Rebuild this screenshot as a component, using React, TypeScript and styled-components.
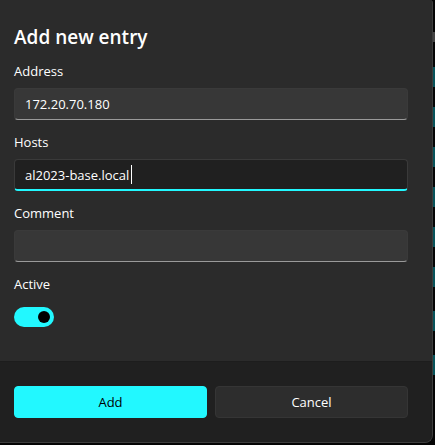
import React, { useState } from "react";
import styled, { createGlobalStyle } from "styled-components";

const accent = "#22f8ff";

const GlobalStyle = createGlobalStyle`
  *, *::before, *::after { box-sizing: border-box; }
  body {
    margin: 0;
    background: #050505;
    color: #ffffff;
    font-family: "Segoe UI", "Open Sans", "Noto Sans", sans-serif;
    font-size: 13px;
    line-height: 20px;
  }
  button, input { font: inherit; color: inherit; }
`;

const Screen = styled.main`
  display: grid;
  grid-template-columns: 1fr 2px;
  align-items: start;
  min-height: 100vh;
  overflow: hidden;
`;

const Dialog = styled.form`
  background: #2b2b2b;
  border: 1px solid #3d3d3d;
  border-top: 0;
  border-left: 0;
  border-radius: 0 3px 8px 0;
  overflow: hidden;
`;

const Body = styled.div`
  display: flex;
  flex-direction: column;
  gap: 12px;
  padding: 23px 24px 34px 14px;
`;

const Title = styled.h1`
  margin: 0 0 -2px;
  font-size: 19px;
  font-weight: 600;
  line-height: 28px;
`;

const Field = styled.div<{ $gap?: number }>`
  display: flex;
  flex-direction: column;
  align-items: stretch;
  gap: ${({ $gap = 7 }) => $gap}px;
`;

const Label = styled.label`
  align-self: flex-start;
`;

const InputShell = styled.div<{ $active?: boolean }>`
  display: flex;
  align-items: center;
  gap: 2px;
  height: 32px;
  padding: 0 10px;
  border: 1px solid #3a3a3a;
  border-bottom: ${({ $active }) => ($active ? `2px solid ${accent}` : "1px solid #9a9a9a")};
  border-radius: 4px;
  background: ${({ $active }) => ($active ? "#202020" : "#373737")};
`;

const TextInput = styled.input<{ $fit?: boolean }>`
  flex: ${({ $fit }) => ($fit ? "0 1 auto" : "1")};
  field-sizing: ${({ $fit }) => ($fit ? "content" : "fixed")};
  min-width: 0;
  padding: 0;
  border: 0;
  outline: 0;
  background: transparent;
  caret-color: ${({ $fit }) => ($fit ? "transparent" : "auto")};
`;

const Caret = styled.span`
  width: 1px;
  height: 19px;
  background: #ffffff;
`;

const Switch = styled.input`
  appearance: none;
  display: flex;
  align-items: center;
  width: 40px;
  height: 20px;
  margin: 0;
  padding: 0 4px;
  border-radius: 10px;
  background: #555555;

  &::before {
    content: "";
    width: 12px;
    height: 12px;
    border-radius: 50%;
    background: #000000;
  }
  &:checked {
    justify-content: flex-end;
    background: ${accent};
  }
`;

const Footer = styled.footer`
  display: grid;
  grid-template-columns: 1fr 1fr;
  gap: 8px;
  padding: 24px 24px 24px 14px;
  border-top: 1px solid #1d1d1d;
  background: #202020;
`;

const Button = styled.button<{ $primary?: boolean }>`
  height: 32px;
  padding: 0 12px;
  border: 1px solid ${({ $primary }) => ($primary ? accent : "#353535")};
  border-radius: 4px;
  background: ${({ $primary }) => ($primary ? accent : "#2d2d2d")};
  color: ${({ $primary }) => ($primary ? "#000000" : "#ffffff")};
`;

const Backdrop = styled.div`
  display: flex;
  flex-direction: column;
  gap: 20px;
  padding-top: 32px;
`;

const Handle = styled.div`
  height: 10px;
  margin-bottom: 5px;
  background: #444444;
`;

const RowToggle = styled.div<{ $spaced?: boolean }>`
  height: 20px;
  margin-top: ${({ $spaced }) => ($spaced ? 4 : 0)}px;
  background: #07535a;
`;

const rows = [false, false, false, false, false, false, true, true];

export default function App() {
  const [address, setAddress] = useState("172.20.70.180");
  const [hosts, setHosts] = useState("al2023-base.local");
  const [comment, setComment] = useState("");
  const [active, setActive] = useState(true);

  return (
    <>
      <GlobalStyle />
      <Screen>
        <Dialog onSubmit={(e) => e.preventDefault()} aria-labelledby="title">
          <Body>
            <Title id="title">Add new entry</Title>
            <Field>
              <Label htmlFor="address">Address</Label>
              <InputShell>
                <TextInput id="address" value={address} onChange={(e) => setAddress(e.target.value)} />
              </InputShell>
            </Field>
            <Field>
              <Label htmlFor="hosts">Hosts</Label>
              <InputShell $active>
                <TextInput id="hosts" $fit value={hosts} onChange={(e) => setHosts(e.target.value)} />
                <Caret />
              </InputShell>
            </Field>
            <Field>
              <Label htmlFor="comment">Comment</Label>
              <InputShell>
                <TextInput id="comment" value={comment} onChange={(e) => setComment(e.target.value)} />
              </InputShell>
            </Field>
            <Field $gap={13}>
              <Label htmlFor="active">Active</Label>
              <Switch
                id="active"
                type="checkbox"
                role="switch"
                checked={active}
                onChange={(e) => setActive(e.target.checked)}
              />
            </Field>
          </Body>
          <Footer>
            <Button type="submit" $primary>Add</Button>
            <Button type="button">Cancel</Button>
          </Footer>
        </Dialog>
        <Backdrop aria-hidden="true">
          <Handle />
          {rows.map((spaced, i) => (
            <RowToggle key={i} $spaced={spaced} />
          ))}
        </Backdrop>
      </Screen>
    </>
  );
}
